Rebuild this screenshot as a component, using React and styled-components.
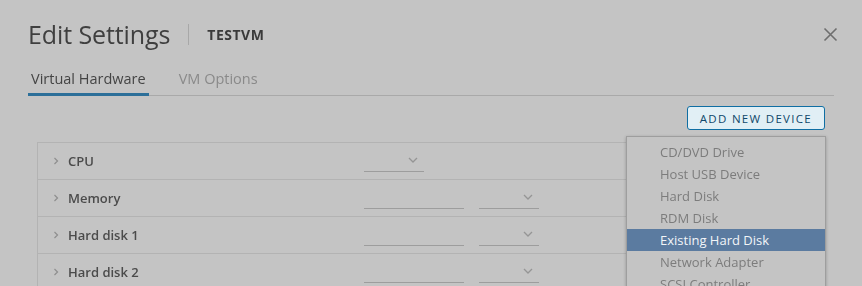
import React from "react";
import styled, { createGlobalStyle } from "styled-components";

const Global = createGlobalStyle`
  html, body { margin: 0; padding: 0; }
  body {
    background: #c4c4c4;
    font-family: "Open Sans", "Noto Sans", sans-serif;
    width: 862px; height: 286px; overflow: hidden;
  }
`;

const Dialog = styled.div`
  position: relative;
  padding: 18px 28px 0 28px;
  height: 286px;
  box-sizing: border-box;
`;

const Blurred = styled.div`
  filter: blur(0.6px);
`;

const Header = styled.div`
  display: flex;
  align-items: center;
  height: 32px;
  margin-right: -4px;
`;

const Title = styled.h1`
  margin: 0;
  font-size: 25px;
  font-weight: 400;
  color: #3f3f3f;
  letter-spacing: -0.1px;
`;

const Divider = styled.span`
  width: 1px;
  height: 21px;
  background: #a8a8a8;
  margin: 0 18px 0 18px;
`;

const Subtitle = styled.span`
  font-size: 14px;
  font-weight: 700;
  color: #3a3a3a;
  letter-spacing: 0.5px;
`;

const Close = styled.button`
  margin-left: auto;
  border: 0;
  background: none;
  padding: 0;
  width: 16px;
  height: 16px;
  display: flex;
  align-items: center;
  justify-content: center;
`;

const Tabs = styled.div`
  display: flex;
  gap: 27px;
  margin-top: 19px;
  border-bottom: 1px solid #a9a9a9;
`;

const Tab = styled.div`
  font-size: 14.5px;
  padding: 0 3px 7px 3px;
  color: ${(p) => (p.$active ? "#444" : "#8a8a8a")};
  box-shadow: ${(p) => (p.$active ? "inset 0 -3px 0 #2c6f99" : "none")};
  margin-bottom: -1px;
  line-height: 20px;
`;

const Toolbar = styled.div`
  position: relative;
  display: flex;
  justify-content: flex-end;
  margin: 10px 9px 0 0;
`;

const AddButton = styled.button`
  height: 24px;
  padding: 0 12px;
  border: 1px solid #0f6ea3;
  border-radius: 3px;
  background: #e1eff5;
  color: #10486b;
  font-family: "Open Sans", sans-serif;
  font-size: 11.5px;
  font-weight: 400;
  letter-spacing: 1.3px;
  cursor: pointer;
`;

const Menu = styled.div`
  position: absolute;
  top: 30px;
  right: -1px;
  width: 198px;
  border: 1px solid #9e9e9e;
  border-bottom: 0;
  background: #c4c4c4;
  padding-top: 4px;
  box-shadow: 0 1px 3px rgba(0, 0, 0, 0.25);
  z-index: 2;
`;

const MenuItem = styled.div`
  height: 22px;
  line-height: 22px;
  padding-left: 33px;
  font-size: 13px;
  color: ${(p) => (p.$selected ? "#f2f5f8" : "#7c7c7c")};
  background: ${(p) => (p.$selected ? "#5b7ba0" : "transparent")};
  filter: ${(p) => (p.$selected ? "none" : "blur(0.5px)")};
  white-space: nowrap;
`;

const Table = styled.div`
  margin: 12px 9px 0 9px;
  border: 1px solid #b3b3b3;
  border-bottom: 0;
`;

const Row = styled.div`
  display: grid;
  grid-template-columns: 326px 1fr;
  align-items: center;
  height: 36px;
  border-bottom: 1px solid #b3b3b3;
`;

const Label = styled.div`
  display: flex;
  align-items: center;
  gap: 8px;
  padding-left: 14px;
  font-size: 13px;
  font-weight: 600;
  color: #4b4b4b;
`;

const Controls = styled.div`
  display: flex;
  gap: 15px;
  align-items: flex-end;
  height: 22px;
`;

const Field = styled.div`
  position: relative;
  width: ${(p) => p.$w}px;
  height: 22px;
  box-sizing: border-box;
  border-bottom: 1px solid #9d9d9d;
`;

const Caret = styled.svg`
  position: absolute;
  right: 5px;
  top: 6px;
`;

const Chevron = () => (
  <svg width="8" height="10" viewBox="0 0 8 10">
    <path d="M2.5 2 L5.5 5 L2.5 8" fill="none" stroke="#8e8e8e" strokeWidth="1.2" />
  </svg>
);

const DownCaret = () => (
  <Caret width="12" height="8" viewBox="0 0 12 8">
    <path d="M2 2 L6 6 L10 2" fill="none" stroke="#959595" strokeWidth="1.3" />
  </Caret>
);

const rows = [
  { name: "CPU", fields: [{ w: 60, sel: true }] },
  { name: "Memory", fields: [{ w: 100 }, { w: 60, sel: true }] },
  { name: "Hard disk 1", fields: [{ w: 100 }, { w: 60, sel: true }] },
  { name: "Hard disk 2", fields: [{ w: 100 }, { w: 60, sel: true }] },
];

const menuItems = [
  "CD/DVD Drive",
  "Host USB Device",
  "Hard Disk",
  "RDM Disk",
  "Existing Hard Disk",
  "Network Adapter",
  "SCSI Controller",
];

export default function App() {
  return (
    <>
      <Global />
      <Dialog>
        <Blurred>
          <Header>
            <Title>Edit Settings</Title>
            <Divider />
            <Subtitle>TESTVM</Subtitle>
            <Close aria-label="close">
              <svg width="15" height="15" viewBox="0 0 15 15">
                <path d="M1.5 1.5 L13.5 13.5 M13.5 1.5 L1.5 13.5" stroke="#6e6e6e" strokeWidth="1.6" />
              </svg>
            </Close>
          </Header>
          <Tabs>
            <Tab $active>Virtual Hardware</Tab>
            <Tab>VM Options</Tab>
          </Tabs>
        </Blurred>
        <Toolbar>
          <AddButton>ADD NEW DEVICE</AddButton>
          <Menu>
            {menuItems.map((m) => (
              <MenuItem key={m} $selected={m === "Existing Hard Disk"}>
                {m}
              </MenuItem>
            ))}
          </Menu>
        </Toolbar>
        <Blurred>
          <Table>
            {rows.map((r) => (
              <Row key={r.name}>
                <Label>
                  <Chevron />
                  {r.name}
                </Label>
                <Controls>
                  {r.fields.map((f, i) => (
                    <Field key={i} $w={f.w}>
                      {f.sel && <DownCaret />}
                    </Field>
                  ))}
                </Controls>
              </Row>
            ))}
          </Table>
        </Blurred>
      </Dialog>
    </>
  );
}
